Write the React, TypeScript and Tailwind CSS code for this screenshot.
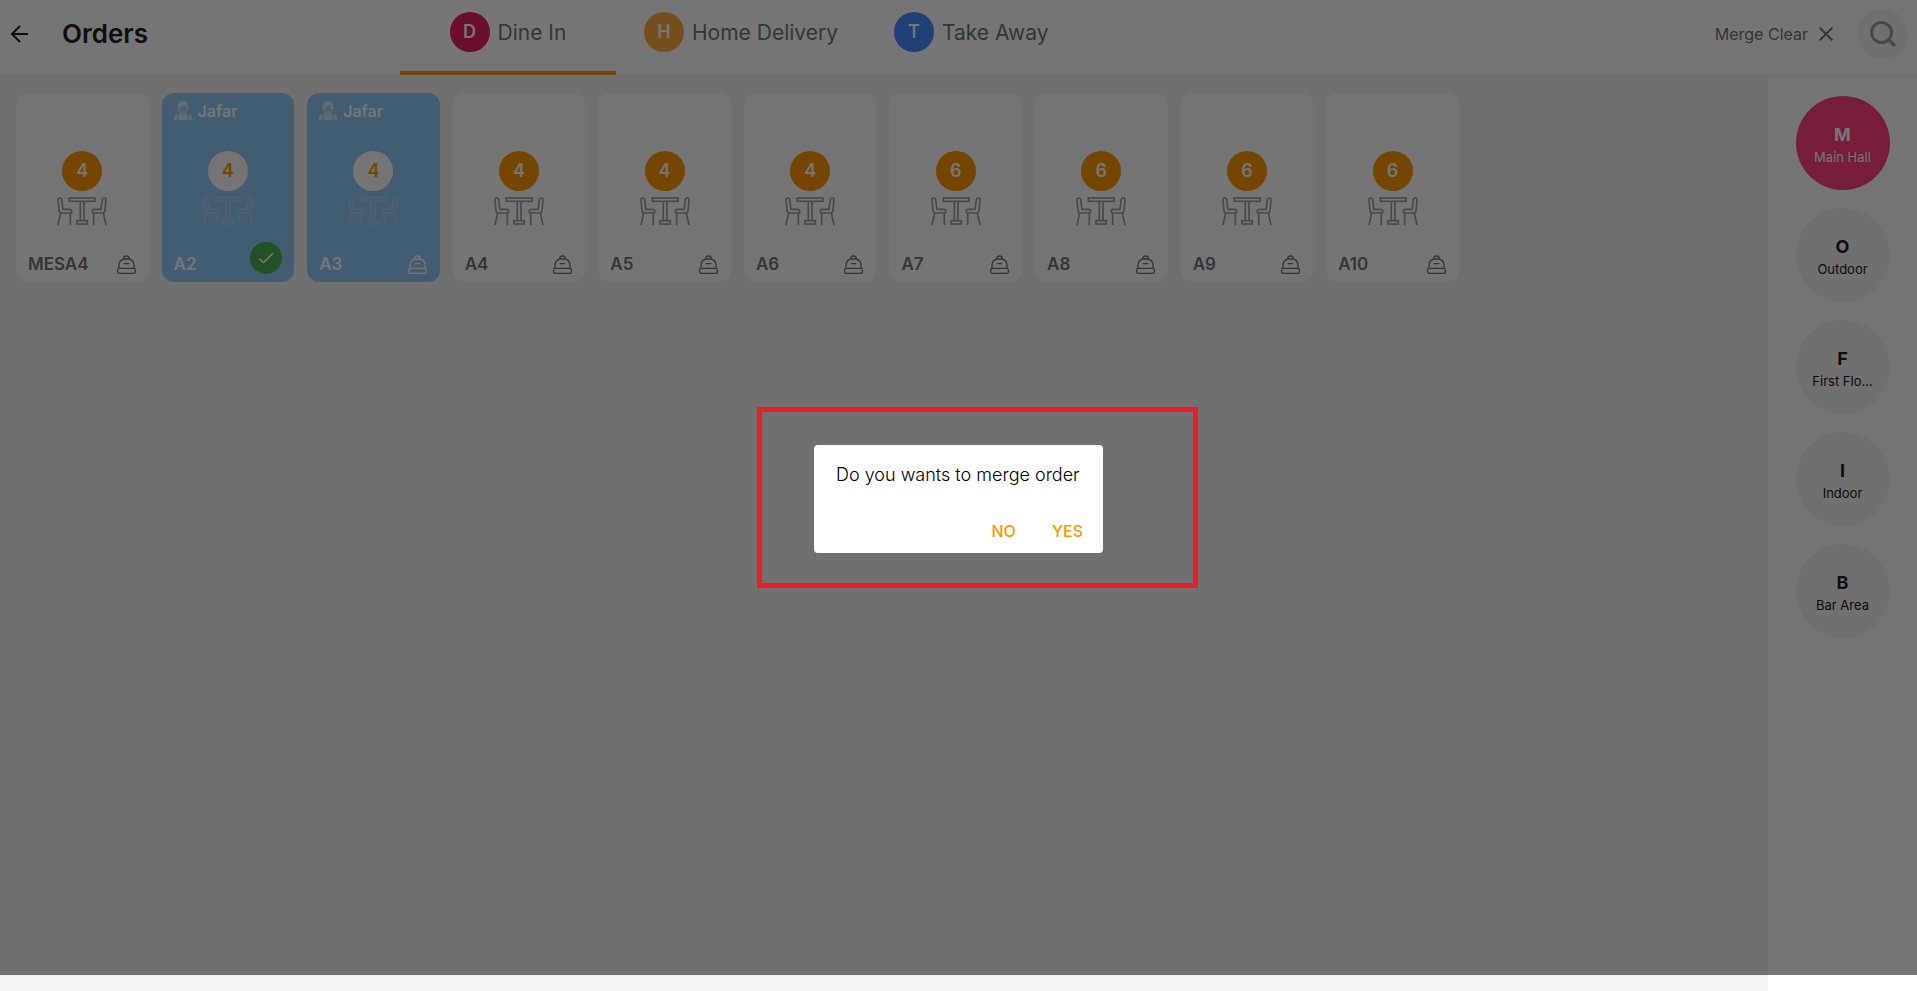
import { useState } from "react";
import { MdCheck, MdClose } from "react-icons/md";

type Table = {
  name: string;
  seats: number;
  waiter?: string;
  selected?: boolean;
};

const orderTypes = [
  { letter: "D", label: "Dine In", color: "bg-[#e91e63]" },
  { letter: "H", label: "Home Delivery", color: "bg-[#ffab40]" },
  { letter: "T", label: "Take Away", color: "bg-[#448aff]" },
];

const tables: Table[] = [
  { name: "MESA4", seats: 4 },
  { name: "A2", seats: 4, waiter: "Jafar", selected: true },
  { name: "A3", seats: 4, waiter: "Jafar" },
  { name: "A4", seats: 4 },
  { name: "A5", seats: 4 },
  { name: "A6", seats: 4 },
  { name: "A7", seats: 6 },
  { name: "A8", seats: 6 },
  { name: "A9", seats: 6 },
  { name: "A10", seats: 6 },
];

const areas = ["Main Hall", "Outdoor", "First Flo...", "Indoor", "Bar Area"];

function BackIcon() {
  return (
    <svg viewBox="0 0 18 18" className="h-[18px] w-[18px]" fill="none" stroke="currentColor" strokeWidth="2">
      <path d="M18 9H2M10 1L2 9l8 8" />
    </svg>
  );
}

function SearchIcon() {
  return (
    <svg viewBox="0 0 26 26" className="h-[26px] w-[26px]" fill="none" stroke="currentColor" strokeWidth="3">
      <circle cx="11.5" cy="11.5" r="10" />
      <path d="M18 18l7 7" strokeWidth="3.6" />
    </svg>
  );
}

function TableIcon() {
  return (
    <svg viewBox="0 0 150 84" className="h-7 w-[50px]" fill="none" stroke="currentColor" strokeWidth="5">
      <rect x="37" y="3" width="77" height="10" />
      <path d="M70 13v57M81 13v57" />
      <rect x="60" y="71" width="31" height="10" />
      <path d="M3 7Q3 3 8 3T14 7L18 37H38Q44 37 44 43T38 48H13Q7 48 6 41Z" />
      <path d="M11 48L3 84M40 48V84" />
      <path d="M147 7Q147 3 142 3T136 7L132 37H112Q106 37 106 43T112 48H137Q143 48 144 41Z" />
      <path d="M139 48L147 84M110 48V84" />
    </svg>
  );
}

function BellIcon() {
  return (
    <svg viewBox="0 0 57 57" className="mr-px h-[19px] w-[19px] shrink-0" fill="none" stroke="currentColor" strokeWidth="4">
      <path d="M6 40V31Q6 12 26 12H31Q51 12 51 31V40" />
      <path d="M20 12C20 0 37 0 37 12M20 26H37" />
      <rect x="2" y="40" width="53" height="15" rx="5" />
    </svg>
  );
}

function WaiterIcon() {
  return (
    <svg viewBox="0 0 54 57" className="h-[19px] w-[18px] opacity-60" fill="currentColor">
      <path
        fillRule="evenodd"
        d="M27 0C16 0 10 8 11 18Q8 19 11 25L14 27Q18 40 27 40T40 27L43 25Q46 19 43 18C44 8 38 0 27 0ZM16 20Q26 18 31 13Q36 18 38 20L36 27Q33 36 27 36T18 27Z"
      />
      <path d="M18 20h7v3h-7zM29 20h7v3h-7zM21 28Q27 33 33 28L32 31Q27 35 22 31Z" />
      <path d="M0 57V48Q1 42 9 41V57ZM54 57V48Q53 42 45 41V57ZM13 40L19 38L27 46L35 38L41 40V57H13Z" />
      <path d="M18 38L27 44L36 38L34 35H20Z" opacity="0.6" />
    </svg>
  );
}

function TableCard({ table }: { table: Table }) {
  const busy = Boolean(table.waiter);

  return (
    <button
      type="button"
      className={`flex h-[189px] flex-col items-center rounded-xl px-3 pb-2 text-left ${
        busy ? "bg-[#90caf9] text-white" : "bg-white text-[#757575]"
      }`}
    >
      <span className="flex h-[58px] w-full items-start gap-1.5 pt-2 text-base font-semibold leading-5">
        {busy && (
          <>
            <WaiterIcon />
            {table.waiter}
          </>
        )}
      </span>
      <span
        className={`flex h-10 w-10 shrink-0 items-center justify-center rounded-full text-lg font-semibold ${
          busy ? "bg-white text-[#ff9800]" : "bg-[#ff9800] text-white"
        }`}
      >
        {table.seats}
      </span>
      <span className={`mt-1.5 ${busy ? "opacity-20" : "text-[#9e9e9e]"}`}>
        <TableIcon />
      </span>
      <span className="mt-auto flex h-8 w-full items-end justify-between">
        <span className="text-[17px] font-semibold leading-5">{table.name}</span>
        {table.selected ? (
          <span className="flex h-8 w-8 items-center justify-center rounded-full bg-[#4caf50]">
            <MdCheck size={20} />
          </span>
        ) : (
          <BellIcon />
        )}
      </span>
    </button>
  );
}

export default function App() {
  const [activeType, setActiveType] = useState("Dine In");
  const [activeArea, setActiveArea] = useState("Main Hall");
  const [open, setOpen] = useState(true);

  return (
    <div className="relative flex min-h-screen flex-col bg-[#f4f4f4] font-['Inter',sans-serif] text-black">
      {/* Header */}
      <header className="flex h-[75px] bg-white">
        <div className="flex w-[400px] items-center gap-[34px] pb-[7px] pl-[10px]">
          <button type="button" aria-label="Back" className="text-[#212121]">
            <BackIcon />
          </button>
          <h1 className="text-[26px] font-semibold leading-8 text-[#212121]">Orders</h1>
        </div>

        <nav className="flex">
          {orderTypes.map((type) => (
            <button
              key={type.label}
              type="button"
              onClick={() => setActiveType(type.label)}
              className={`flex items-start justify-center gap-2 border-b-4 px-7 pt-3 text-[21px] leading-[42px] text-[#757575] ${
                activeType === type.label ? "w-[216px] border-[#ff9800]" : "border-transparent"
              }`}
            >
              <span className={`flex h-10 w-10 items-center justify-center rounded-full text-lg font-semibold text-white ${type.color}`}>
                {type.letter}
              </span>
              {type.label}
            </button>
          ))}
        </nav>

        <div className="ml-auto flex items-center gap-5 pb-[7px] pr-[9px]">
          <button type="button" className="flex items-center gap-1.5 text-base text-[#757575]">
            Merge Clear
            <MdClose size={24} />
          </button>
          <button
            type="button"
            aria-label="Search"
            className="flex h-[50px] w-[50px] items-center justify-center rounded-full bg-[#f4f4f4] text-[#9e9e9e]"
          >
            <SearchIcon />
          </button>
        </div>
      </header>

      <div className="flex flex-1">
        {/* Tables */}
        <main className="grid flex-1 grid-cols-12 content-start gap-[13px] pl-4 pr-[18px] pt-[18px]">
          {tables.map((table) => (
            <TableCard key={table.name} table={table} />
          ))}
        </main>

        {/* Areas */}
        <aside className="mt-[3px] flex w-[149px] flex-col items-center gap-[18px] bg-white pt-[18px]">
          {areas.map((area) => (
            <button
              key={area}
              type="button"
              onClick={() => setActiveArea(area)}
              className={`flex h-[94px] w-[94px] flex-col items-center justify-center rounded-full pt-[3px] ${
                activeArea === area ? "bg-[#ff4081] text-white" : "bg-[#f4f4f4] text-[#212121]"
              }`}
            >
              <span className="text-lg font-bold leading-6">{area[0]}</span>
              <span className="text-[13px] leading-5">{area}</span>
            </button>
          ))}
        </aside>
      </div>

      {open && (
        <>
          <div className="absolute inset-x-0 bottom-4 top-0 bg-black/54" />
          <div className="absolute inset-0 flex items-center justify-center pl-[38px] pt-1">
            <div className="border-[5px] border-[#ed1c24] pb-[30px] pl-[52px] pr-[90px] pt-[33px]">
              <div role="dialog" aria-labelledby="merge-title" className="w-[289px] rounded bg-white px-2 pb-0.5 pt-[18px]">
                <p id="merge-title" className="whitespace-nowrap px-3.5 text-lg font-light leading-6">
                  Do you wants to merge order
                </p>
                <div className="mt-6 flex justify-end gap-3 text-base font-medium text-[#ff9800]">
                  <button type="button" onClick={() => setOpen(false)} className="h-10 px-3">
                    NO
                  </button>
                  <button type="button" onClick={() => setOpen(false)} className="h-10 px-3">
                    YES
                  </button>
                </div>
              </div>
            </div>
          </div>
        </>
      )}
    </div>
  );
}
